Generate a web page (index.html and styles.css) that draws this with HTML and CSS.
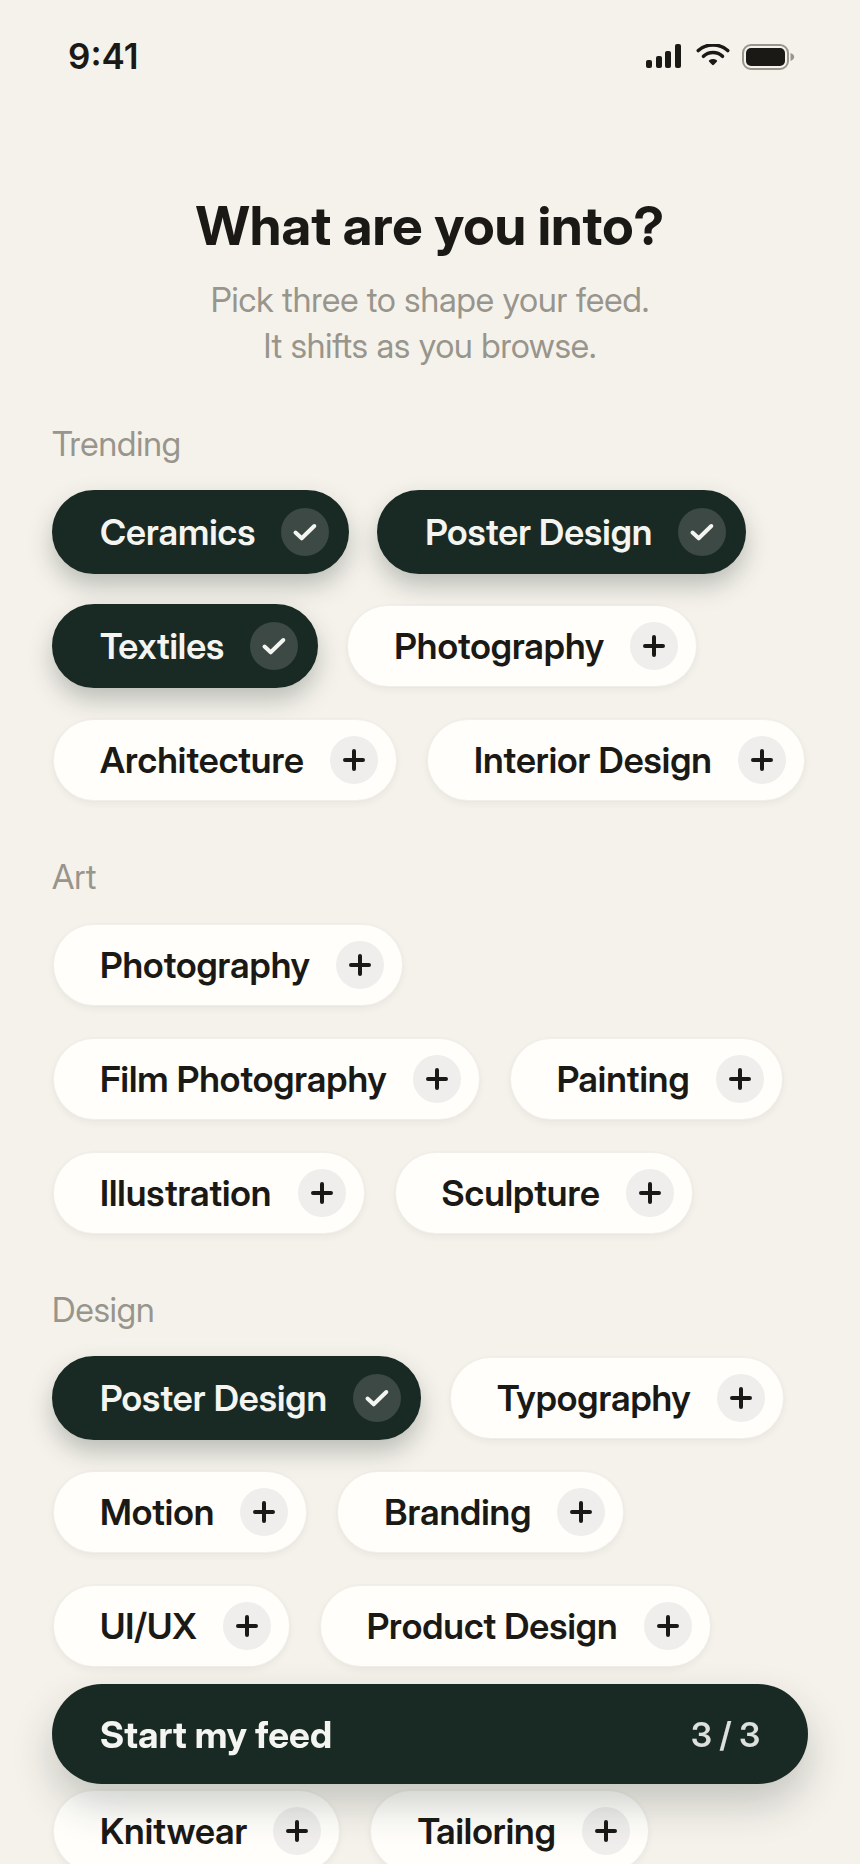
FILE: index.html
```html
<!DOCTYPE html>
<html lang="en">
<head>
    <meta charset="UTF-8">
    <meta name="viewport" content="width=device-width, initial-scale=1">
    <title>What are you into?</title>
    <link rel="stylesheet" href="styles.css">
</head>
<body>
    <!-- shared icons -->
    <svg width="0" height="0" class="sprite" aria-hidden="true">
        <symbol id="plus" viewBox="0 0 48 48">
            <path d="M24 15v18M15 24h18" fill="none" stroke="currentColor" stroke-width="4" stroke-linecap="round"/>
        </symbol>
        <symbol id="check" viewBox="0 0 48 48">
            <path d="M14.500 24.500l6.200 5.800L33.300 18" fill="none" stroke="currentColor" stroke-width="4" stroke-linecap="round" stroke-linejoin="round"/>
        </symbol>
    </svg>

    <header class="status-bar">
        <time class="clock">9:41</time>
        <div class="status-icons">
            <svg width="38" height="26" viewBox="0 0 38 26" fill="currentColor">
                <rect x="0" y="16" width="6" height="8" rx="2"/>
                <rect x="10" y="12" width="6" height="12" rx="2"/>
                <rect x="19" y="7" width="6" height="17" rx="2"/>
                <rect x="29" y="0" width="6" height="24" rx="2"/>
            </svg>
            <svg width="34" height="26" viewBox="0 0 34 26">
                <g fill="none" stroke="currentColor" stroke-width="3.600" stroke-linecap="round">
                    <path d="M2.300 6.500C10.500-.8 23.500-.8 31.700 6.500"/>
                    <path d="M7.500 12.300c5.300-5 13.700-5 19 0"/>
                </g>
                <path d="M13.200 16.300c2.200-1.700 5.400-1.700 7.600 0 .5.500.5 1 0 1.500l-2.900 3c-.6.500-1.200.5-1.800 0l-2.900-3c-.5-.5-.5-1 0-1.500z" fill="currentColor"/>
            </svg>
            <svg width="53" height="26" viewBox="0 0 53 26">
                <rect x="1" y="1" width="45" height="24" rx="8" fill="none" stroke="#98958d" stroke-width="2"/>
                <rect x="4" y="4" width="39" height="18" rx="5" fill="currentColor"/>
                <path d="M48.500 9c2.300.8 3.700 2.200 3.700 4s-1.400 3.200-3.700 4z" fill="#98958d"/>
            </svg>
        </div>
    </header>

    <main>
        <h1>What are you into?</h1>
        <p class="intro">Pick three to shape your feed.<br>It shifts as you browse.</p>

        <section>
            <h2>Trending</h2>
            <div class="chips">
                <button type="button" class="chip selected" aria-pressed="true">Ceramics <svg class="icon"><use href="#check"/></svg></button>
                <button type="button" class="chip selected" aria-pressed="true">Poster Design <svg class="icon"><use href="#check"/></svg></button>
                <button type="button" class="chip selected" aria-pressed="true">Textiles <svg class="icon"><use href="#check"/></svg></button>
                <button type="button" class="chip" aria-pressed="false">Photography <svg class="icon"><use href="#plus"/></svg></button>
                <button type="button" class="chip" aria-pressed="false">Architecture <svg class="icon"><use href="#plus"/></svg></button>
                <button type="button" class="chip" aria-pressed="false">Interior Design <svg class="icon"><use href="#plus"/></svg></button>
            </div>
        </section>

        <section>
            <h2>Art</h2>
            <div class="chips">
                <button type="button" class="chip" aria-pressed="false">Photography <svg class="icon"><use href="#plus"/></svg></button>
                <button type="button" class="chip" aria-pressed="false">Film Photography <svg class="icon"><use href="#plus"/></svg></button>
                <button type="button" class="chip" aria-pressed="false">Painting <svg class="icon"><use href="#plus"/></svg></button>
                <button type="button" class="chip" aria-pressed="false">Illustration <svg class="icon"><use href="#plus"/></svg></button>
                <button type="button" class="chip" aria-pressed="false">Sculpture <svg class="icon"><use href="#plus"/></svg></button>
            </div>
        </section>

        <section>
            <h2>Design</h2>
            <div class="chips">
                <button type="button" class="chip selected" aria-pressed="true">Poster Design <svg class="icon"><use href="#check"/></svg></button>
                <button type="button" class="chip" aria-pressed="false">Typography <svg class="icon"><use href="#plus"/></svg></button>
                <button type="button" class="chip" aria-pressed="false">Motion <svg class="icon"><use href="#plus"/></svg></button>
                <button type="button" class="chip" aria-pressed="false">Branding <svg class="icon"><use href="#plus"/></svg></button>
                <button type="button" class="chip" aria-pressed="false">UI/UX <svg class="icon"><use href="#plus"/></svg></button>
                <button type="button" class="chip" aria-pressed="false">Product Design <svg class="icon"><use href="#plus"/></svg></button>
            </div>
        </section>

        <section class="untitled">
            <div class="chips">
                <button type="button" class="chip" aria-pressed="false">Knitwear <svg class="icon"><use href="#plus"/></svg></button>
                <button type="button" class="chip" aria-pressed="false">Tailoring <svg class="icon"><use href="#plus"/></svg></button>
            </div>
        </section>
    </main>

    <button type="button" class="start">
        <span>Start my feed</span>
        <span class="count">3 / 3</span>
    </button>
</body>
</html>
```
FILE: styles.css
```css
* {
    box-sizing: border-box;
}
body {
    margin: 0;
    height: 100vh;
    overflow: hidden;
    display: flex;
    flex-direction: column;
    background: #f5f2eb;
    color: #1b1915;
    font-family: "Inter Display", Inter, "Liberation Sans", sans-serif;
}
.sprite {
    position: absolute;
}
.status-bar {
    flex: none;
    display: flex;
    justify-content: space-between;
    padding: 36px 65px 0 68px;
    height: 112px;
}
.clock {
    font-family: Inter, "Liberation Sans", sans-serif;
    font-size: 35px;
    line-height: 40px;
    font-weight: 600;
}
.status-icons {
    display: flex;
    gap: 12px;
    padding-top: 8px;
}
main {
    flex: 1;
    min-height: 0;
    overflow-y: auto;
    scrollbar-width: none;
    padding: 80px 52px 0;
}
h1 {
    margin: 0 0 17px;
    font-size: 54px;
    line-height: 68px;
    font-weight: 700;
    text-align: center;
}
.intro {
    margin: 0 0 55px;
    color: #98958c;
    font-size: 34px;
    line-height: 46px;
    text-align: center;
}
h2 {
    margin: 0 0 26px;
    color: #98958c;
    font-size: 34px;
    line-height: 40px;
    font-weight: 400;
}
section {
    margin-bottom: 55px;
}
.untitled {
    padding-top: 66px;
}
.chips {
    display: flex;
    flex-wrap: wrap;
    gap: 30px 28px;
}
.chip {
    display: flex;
    align-items: center;
    gap: 26px;
    height: 84px;
    padding: 0 18px 0 46px;
    border: 2px solid rgba(27, 25, 21, 0.01);
    border-radius: 42px;
    background: #fffefb;
    background-clip: padding-box;
    box-shadow: 0 3px 6px rgba(27, 25, 21, 0.04);
    color: #1b1915;
    font-family: inherit;
    font-size: 36px;
    font-weight: 600;
    cursor: pointer;
}
.selected {
    border-color: #192a24;
    background: #192a24;
    box-shadow: 0 12px 24px rgba(25, 42, 36, 0.26);
    color: #f4f4f1;
}
.icon {
    flex: none;
    width: 48px;
    height: 48px;
    border-radius: 50%;
    background: #efeeec;
}
.selected .icon {
    background: #3c4944;
}
.start {
    position: fixed;
    left: 52px;
    right: 52px;
    bottom: 80px;
    display: flex;
    align-items: center;
    justify-content: space-between;
    height: 100px;
    padding: 0 48px;
    border: none;
    border-radius: 50px;
    background: #192a24;
    box-shadow: 0 20px 40px rgba(25, 42, 36, 0.22);
    color: #f4f4f1;
    font-family: inherit;
    font-size: 37px;
    font-weight: 700;
    cursor: pointer;
}
.count {
    color: #dde0dc;
    font-size: 34px;
    font-weight: 600;
}
```
